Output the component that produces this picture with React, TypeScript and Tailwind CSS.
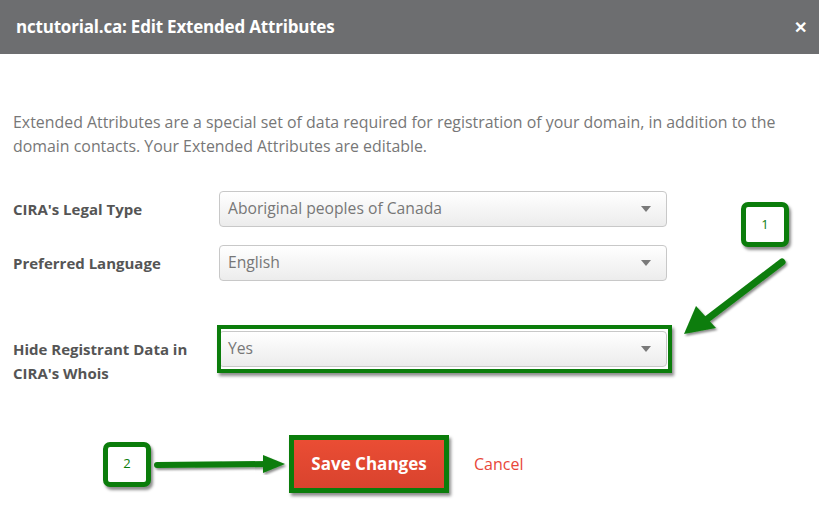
import React from "react";

const font = { fontFamily: "'Open Sans', Lato, 'Liberation Sans', sans-serif" };

function Caret() {
  return (
    <svg width="10" height="6" viewBox="0 0 10 6" className="shrink-0">
      <path d="M0 0h10L5 6z" fill="#7a7a7a" />
    </svg>
  );
}

function Select({ value }: { value: string }) {
  return (
    <div className="w-[448px] h-[36px] rounded-[4px] border border-[#c8c8c8] bg-gradient-to-b from-white to-[#ececec] flex items-center justify-between pl-[8px] pr-[15px] text-[15.7px] text-[#777]">
      <span>{value}</span>
      <Caret />
    </div>
  );
}

function Callout({ n }: { n: string }) {
  return (
    <div className="w-[48px] h-[45px] rounded-[7px] border-[5px] border-[#0b7d0b] bg-white flex items-center justify-center text-[13px] text-[#0b7d0b] shadow-[2px_3px_3px_rgba(0,0,0,0.45)]">
      {n}
    </div>
  );
}

export default function App() {
  return (
    <div className="relative w-[819px] h-[507px] bg-white overflow-hidden" style={font}>
      <header className="h-[54px] bg-[#6d6e70] flex items-center justify-between pl-[16px] pr-[12px]">
        <h1 className="text-white font-bold text-[17px] tracking-[-0.2px]">nctutorial.ca: Edit Extended Attributes</h1>
        <span className="text-white font-bold text-[16px]">✕</span>
      </header>

      <div className="px-[13px] pt-[56px]">
        <p className="text-[15.9px] leading-[24px] text-[#777]">
          Extended Attributes are a special set of data required for registration of your domain, in addition to the domain contacts. Your Extended Attributes are editable.
        </p>

        <div className="mt-[33px] flex flex-col">
          <div className="flex items-center">
            <label className="w-[206px] text-[15px] font-bold text-[#555]">CIRA's Legal Type</label>
            <Select value="Aboriginal peoples of Canada" />
          </div>
          <div className="flex items-center mt-[18px]">
            <label className="w-[206px] text-[15px] font-bold text-[#555]">Preferred Language</label>
            <Select value="English" />
          </div>
          <div className="flex items-start mt-[50px]">
            <label className="w-[206px] text-[15px] font-bold text-[#555] leading-[24px] pt-[6px]">
              Hide Registrant Data in<br />CIRA's Whois
            </label>
            <div className="relative">
              <Select value="Yes" />
              <div className="absolute -left-[2px] -top-[6px] w-[455px] h-[48px] border-[4px] border-[#0b7d0b] shadow-[2px_3px_3px_rgba(0,0,0,0.45)]" />
            </div>
          </div>
        </div>

        <div className="mt-[50px] flex items-center pl-[90px]">
          <Callout n="2" />
          <svg width="135" height="22" viewBox="0 0 135 22" className="ml-[2px] mr-[1px]">
            <g filter="url(#sh)">
              <path d="M4 12 L116 11" stroke="#0b7d0b" strokeWidth="6" strokeLinecap="round" />
              <path d="M110 2 L132 11 L110 20 Z" fill="#0b7d0b" />
            </g>
            <defs>
              <filter id="sh" x="-10%" y="-50%" width="120%" height="200%">
                <feDropShadow dx="1.5" dy="2" stdDeviation="1" floodColor="#000" floodOpacity="0.45" />
              </filter>
            </defs>
          </svg>
          <button className="w-[160px] h-[58px] border-[5px] border-[#0b7d0b] bg-gradient-to-b from-[#ea4d34] to-[#d9432e] text-white font-bold text-[17px] shadow-[2px_3px_3px_rgba(0,0,0,0.45)]">
            Save Changes
          </button>
          <a className="ml-[25px] text-[16px] text-[#e8473a]">Cancel</a>
        </div>
      </div>

      <div className="absolute left-[741px] top-[202px]">
        <Callout n="1" />
      </div>
      <svg className="absolute left-[678px] top-[250px]" width="115" height="95" viewBox="0 0 115 95">
        <defs>
          <filter id="sh1" x="-20%" y="-20%" width="140%" height="140%">
            <feDropShadow dx="1.5" dy="2" stdDeviation="1" floodColor="#000" floodOpacity="0.45" />
          </filter>
        </defs>
        <g filter="url(#sh1)">
          <path d="M104 12 L28 70" stroke="#0b7d0b" strokeWidth="7" strokeLinecap="round" />
          <path d="M6 84 L18 56 L38 78 Z" fill="#0b7d0b" />
        </g>
      </svg>
    </div>
  );
}
